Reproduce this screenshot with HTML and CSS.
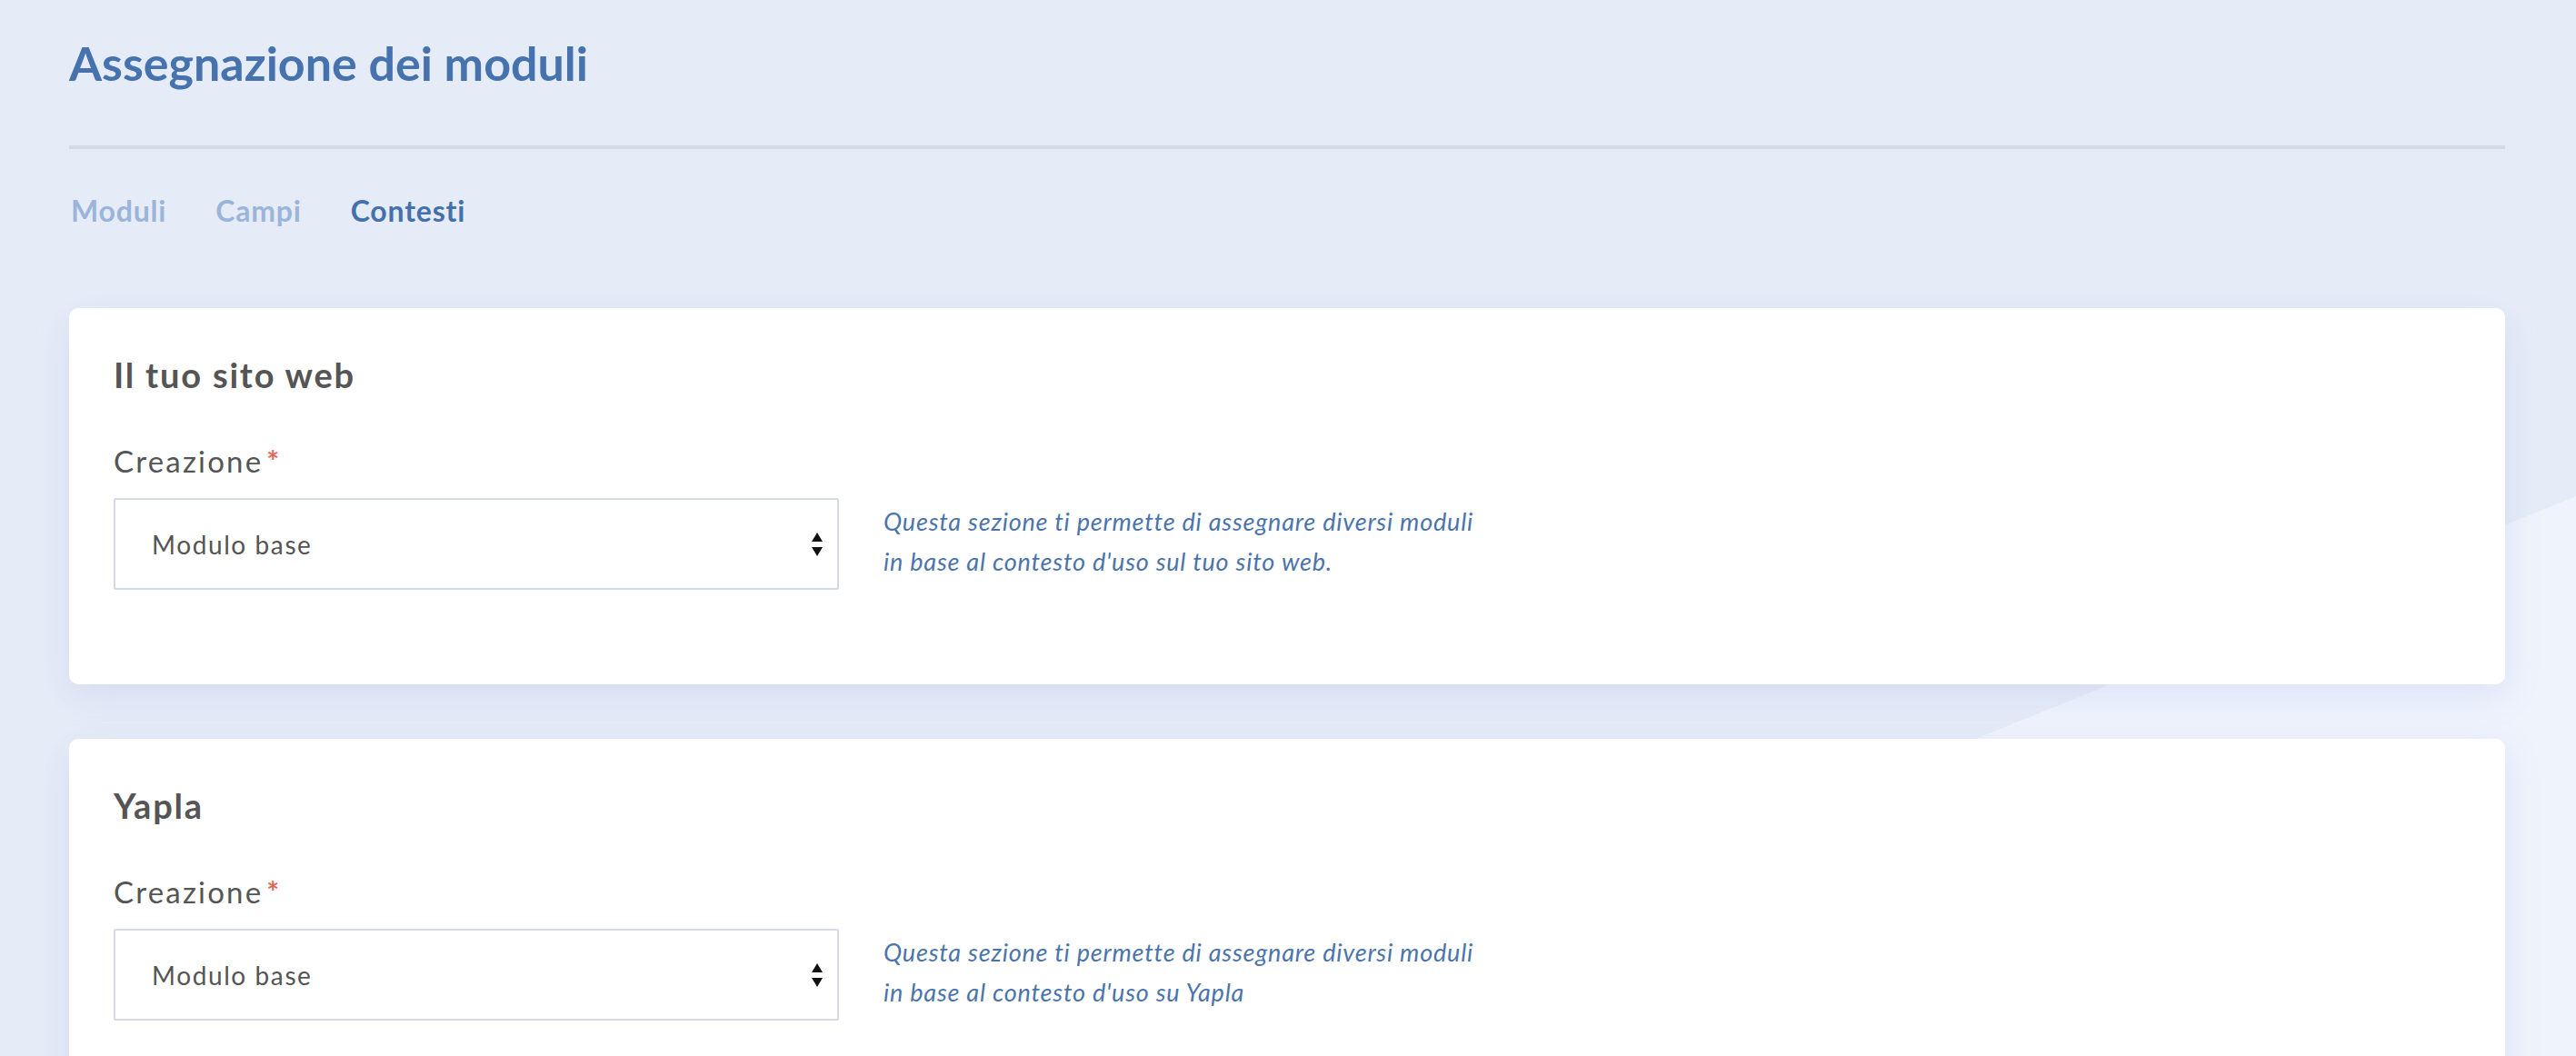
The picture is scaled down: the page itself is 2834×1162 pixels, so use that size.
FILE: index.html
```html
<!DOCTYPE html>
<html lang="it">
<head>
  <meta charset="UTF-8" />
  <meta name="viewport" content="width=device-width, initial-scale=1.0" />
  <title>Assegnazione dei moduli</title>
  <link rel="stylesheet" href="styles.css">
</head>
<body>
  <div class="page">
    <h1 class="page-title">Assegnazione dei moduli</h1>

    <nav class="tabs">
      <a href="#" class="tab">Moduli</a>
      <a href="#" class="tab">Campi</a>
      <a href="#" class="tab tab-active">Contesti</a>
    </nav>

    <section class="card">
      <h2 class="card-title">Il tuo sito web</h2>
      <label class="field-label" for="ctxWeb">Creazione<span class="required">*</span></label>
      <div class="field-row">
        <div class="select-wrap">
          <select id="ctxWeb" class="select">
            <option>Modulo base</option>
          </select>
          <svg class="select-arrows" width="12" height="26" viewBox="0 0 12 26">
            <path d="M6 0 L12 10 L0 10 Z" fill="#111" />
            <path d="M0 16 L12 16 L6 26 Z" fill="#111" />
          </svg>
        </div>
        <p class="field-help">Questa sezione ti permette di assegnare diversi moduli<br>in base al contesto d'uso sul tuo sito web.</p>
      </div>
    </section>

    <section class="card">
      <h2 class="card-title">Yapla</h2>
      <label class="field-label" for="ctxYapla">Creazione<span class="required">*</span></label>
      <div class="field-row">
        <div class="select-wrap">
          <select id="ctxYapla" class="select">
            <option>Modulo base</option>
          </select>
          <svg class="select-arrows" width="12" height="26" viewBox="0 0 12 26">
            <path d="M6 0 L12 10 L0 10 Z" fill="#111" />
            <path d="M0 16 L12 16 L6 26 Z" fill="#111" />
          </svg>
        </div>
        <p class="field-help">Questa sezione ti permette di assegnare diversi moduli<br>in base al contesto d'uso su Yapla</p>
      </div>
    </section>
  </div>
</body>
</html>
```

FILE: styles.css
```css
* {
  box-sizing: border-box;
}

html {
  height: 100%;
  background: linear-gradient(158deg, #e6ecf7 1568px, #eff3fc 1568px);
}

body {
  margin: 0;
  font-family: Lato, "Noto Sans", sans-serif;
  color: #555;
}

.page {
  margin: 0 78px 0 76px;
  padding-top: 38px;
}

.page-title {
  margin: 0;
  font-size: 52px;
  line-height: 62px;
  font-weight: 700;
  color: #4672ad;
  padding-bottom: 60px;
  border-bottom: 4px solid #d3dbe7;
}

.tabs {
  display: flex;
  gap: 54px;
  margin-top: 48px;
  padding-left: 2px;
}

.tab {
  font-size: 32px;
  line-height: 40px;
  font-weight: 700;
  letter-spacing: 0.8px;
  color: #9bb5da;
  text-decoration: none;
}

.tab-active {
  color: #4470ab;
}

.card {
  margin-top: 87px;
  background: #fff;
  border-radius: 10px;
  padding: 50px 49px 104px;
  box-shadow: 0 12px 40px rgba(110, 140, 225, 0.16);
}

.card + .card {
  margin-top: 60px;
}

.card-title {
  margin: 0;
  font-size: 38px;
  line-height: 46px;
  font-weight: 700;
  letter-spacing: 1.8px;
  color: #555;
}

.field-label {
  display: block;
  margin-top: 52px;
  font-size: 33px;
  line-height: 40px;
  letter-spacing: 2.2px;
  color: #555;
}

.required {
  color: #e2675a;
  margin-left: 4px;
  font-weight: 700;
}

.field-row {
  display: flex;
  align-items: center;
  gap: 49px;
  margin-top: 21px;
}

.select-wrap {
  position: relative;
  width: 798px;
  flex-shrink: 0;
}

.select {
  appearance: none;
  -webkit-appearance: none;
  width: 100%;
  height: 101px;
  padding: 0 60px 0 40px;
  border: 2px solid #d5dbe6;
  border-radius: 2px;
  background: #fff;
  font-family: Lato, "Noto Sans", sans-serif;
  font-size: 28px;
  letter-spacing: 1.6px;
  color: #555;
}

.select-arrows {
  position: absolute;
  right: 18px;
  top: 38px;
  pointer-events: none;
}

.field-help {
  margin: -6px 0 0;
  font-size: 27px;
  line-height: 44px;
  font-style: italic;
  letter-spacing: 0.8px;
  color: #4b74ab;
}
```
